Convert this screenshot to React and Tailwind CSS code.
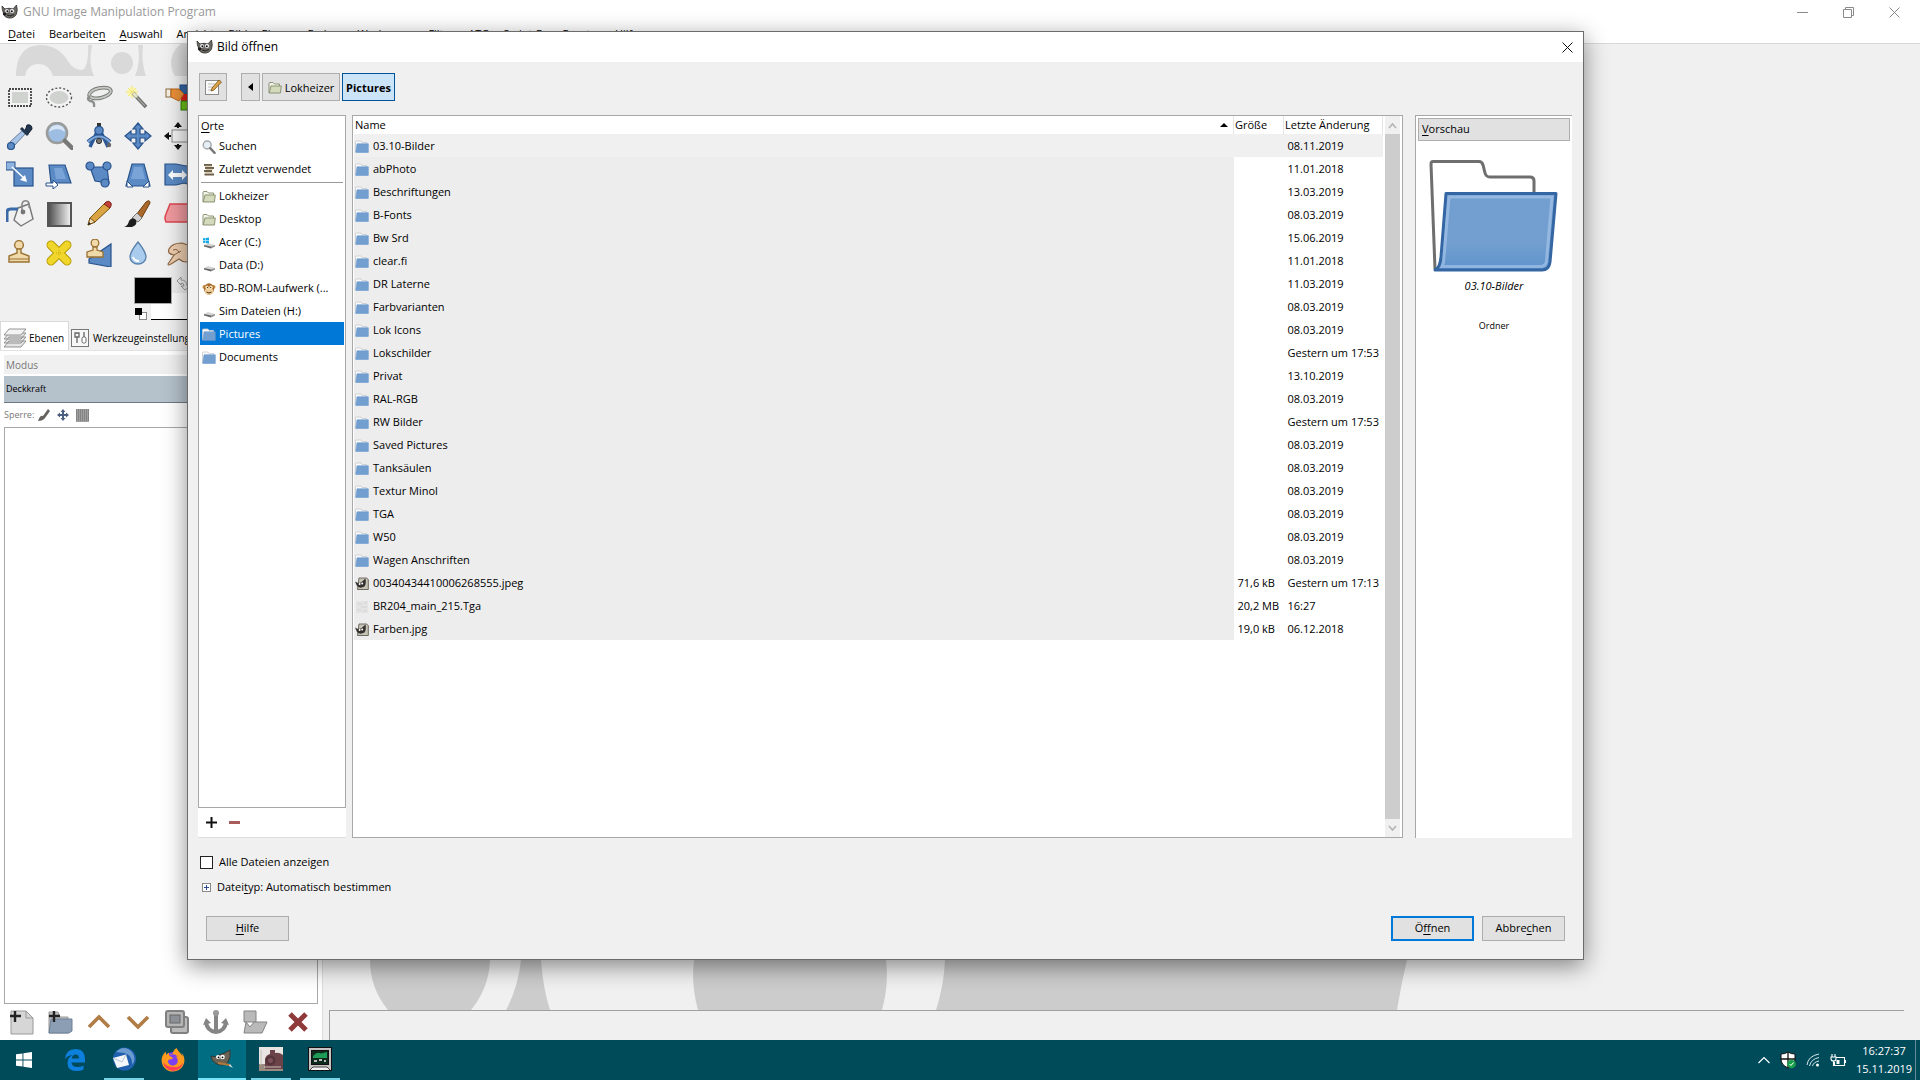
import React, { useState } from "react";
import { FaFirefoxBrowser } from "react-icons/fa";

const MENU = [
  ["", "D", "atei"],
  ["Bearbeite", "n", ""],
  ["", "A", "uswahl"],
  ["An", "s", "icht"],
  ["", "B", "ild"],
  ["", "E", "bene"],
  ["", "F", "arben"],
  ["", "W", "erkzeuge"],
  ["Filte", "r", ""],
  ["ATG", "", ""],
  ["", "S", "cript-Fu"],
  ["Fe", "n", "ster"],
  ["", "H", "ilfe"],
];

const PLACES = [
  { name: "Lokheizer", icon: "home" },
  { name: "Desktop", icon: "home" },
  { name: "Acer (C:)", icon: "win" },
  { name: "Data (D:)", icon: "drive" },
  { name: "BD-ROM-Laufwerk (...", icon: "monkey" },
  { name: "Sim Dateien (H:)", icon: "drive" },
  { name: "Pictures", icon: "folder" },
  { name: "Documents", icon: "folder" },
];

const FILES = [
  { name: "03.10-Bilder", date: "08.11.2019" },
  { name: "abPhoto", date: "11.01.2018" },
  { name: "Beschriftungen", date: "13.03.2019" },
  { name: "B-Fonts", date: "08.03.2019" },
  { name: "Bw Srd", date: "15.06.2019" },
  { name: "clear.fi", date: "11.01.2018" },
  { name: "DR Laterne", date: "11.03.2019" },
  { name: "Farbvarianten", date: "08.03.2019" },
  { name: "Lok Icons", date: "08.03.2019" },
  { name: "Lokschilder", date: "Gestern um 17:53" },
  { name: "Privat", date: "13.10.2019" },
  { name: "RAL-RGB", date: "08.03.2019" },
  { name: "RW Bilder", date: "Gestern um 17:53" },
  { name: "Saved Pictures", date: "08.03.2019" },
  { name: "Tanksäulen", date: "08.03.2019" },
  { name: "Textur Minol", date: "08.03.2019" },
  { name: "TGA", date: "08.03.2019" },
  { name: "W50", date: "08.03.2019" },
  { name: "Wagen Anschriften", date: "08.03.2019" },
  { name: "00340434410006268555.jpeg", size: "71,6 kB", date: "Gestern um 17:13", icon: "image" },
  { name: "BR204_main_215.Tga", size: "20,2 MB", date: "16:27", icon: "blank" },
  { name: "Farben.jpg", size: "19,0 kB", date: "06.12.2018", icon: "image" },
];

function Wilber({ className }) {
  return (
    <svg viewBox="0 0 18 16" className={className}>
      <path d="M1 2 L4 5 Q8 3.5 12 5 L15.5 1 Q17 6 15.5 10 Q13 14.5 8 14 Q3 13.5 2.5 9 Q1 6 1 2Z" fill="#6d6a63" stroke="#2f2d2a" strokeWidth=".8" />
      <path d="M6 11 Q9 13 13 10.5" stroke="#222" fill="none" />
      <circle cx="6" cy="7" r="2.3" fill="#f4f4f4" stroke="#333" strokeWidth=".5" />
      <circle cx="11" cy="7" r="2.5" fill="#f4f4f4" stroke="#333" strokeWidth=".5" />
      <circle cx="6.4" cy="7.2" r="1" fill="#111" />
      <circle cx="10.8" cy="7.2" r="1" fill="#111" />
      <ellipse cx="3.6" cy="10" rx="1.8" ry="1.4" fill="#1c1c1c" />
    </svg>
  );
}

function FileIcon({ type = "folder" }) {
  const cls = "h-[14px] w-[14px] shrink-0";
  if (type === "home")
    return (
      <svg viewBox="0 0 14 14" className={cls}>
        <path d="M1 12 V2.5 Q1 1.5 2 1.5 H5 L6.5 3 H11.5 V5" fill="#f1f3e6" stroke="#8b9375" />
        <path d="M3 5 H13.3 L12.4 12 H1.2Z" fill="#d3dabb" stroke="#8b9375" />
      </svg>
    );
  if (type === "image")
    return (
      <svg viewBox="0 0 14 14" className={cls}>
        <path d="M4 1 H11.5 L13.3 2.5 V12.5 H2.500Z" fill="#c6c4b6" stroke="#6c6a60" />
        <path d="M0 4.5 L3 6 L6 5.500 L10.5 1.500 Q11.5 7 9.5 9.500 Q5 12 2 9 Z" fill="#33312e" />
        <circle cx="4.6" cy="7" r="1" fill="#fff" />
        <circle cx="7.2" cy="6.600" r="1" fill="#fff" />
      </svg>
    );
  if (type === "blank")
    return (
      <svg viewBox="0 0 14 14" className={cls}>
        <path d="M1 1H13V13H1Z" fill="#e4e4e4" />
        <path d="M2 4H7M6 7H12M2 10H6M9 3H12M8 11H12" stroke="#d3d3d3" />
      </svg>
    );
  if (type === "win" || type === "drive")
    return (
      <svg viewBox="0 0 14 14" className={cls}>
        <path d="M2 9 L6 7 L13 9 L9 11.500Z" fill="#d5d5d5" />
        <path d="M2 9 L9 10.500 V12.500 L2 10.500Z" fill="#666" />
        <path d="M9 10.500 L13 9 V10.500 L9 12.500Z" fill="#8c8c8c" />
        {type === "win" && <path d="M1 2.2L3.3 2V4.3H1ZM3.8 1.9L7 1.5V4.3H3.8ZM1 4.8H3.3V7L1 6.8ZM3.8 4.8H7V7.5L3.8 7.1Z" fill="#18a9e8" />}
      </svg>
    );
  if (type === "monkey")
    return (
      <svg viewBox="0 0 14 14" className={cls}>
        <circle cx="2.5" cy="5" r="2" fill="#c98a3e" />
        <circle cx="11.5" cy="5" r="2" fill="#c98a3e" />
        <ellipse cx="7" cy="7" rx="5" ry="5.8" fill="#a8692a" />
        <ellipse cx="7" cy="9.3" rx="4.2" ry="3.4" fill="#f0cf9a" />
        <ellipse cx="5" cy="5.3" rx="1.7" ry="1.9" fill="#f7dfb6" />
        <ellipse cx="9" cy="5.3" rx="1.7" ry="1.9" fill="#f7dfb6" />
        <path d="M5 5.5h1M8.2 5.5h1M4.5 10 Q7 12 9.5 10" stroke="#4a2c0d" fill="none" />
      </svg>
    );
  if (type === "search")
    return (
      <svg viewBox="0 0 14 14" className={cls}>
        <circle cx="5.2" cy="5" r="4" fill="#e6eef5" stroke="#a3a6a8" strokeWidth="1.4" />
        <path d="M8.2 8.2 L12.6 12.8" stroke="#77797b" strokeWidth="2.4" strokeLinecap="round" />
      </svg>
    );
  if (type === "recent")
    return (
      <svg viewBox="0 0 14 14" className={cls}>
        <path d="M2 2H10M3 5H12M2 8H10M2.5 11.5H12" stroke="#6e5f48" strokeWidth="2" />
        <path d="M3 3.3H10M4 6.4H11M3 9.5H11" stroke="#d9cfb9" />
      </svg>
    );
  return (
    <svg viewBox="0 0 14 14" className={cls}>
      <path d="M.5 12V2Q.5 1 1.5 1H6L7 2.500H11.5V5" fill="#fbfbfb" stroke="#c3c8cd" strokeWidth=".8" />
      <path d="M2 3.800H13.3V12.4H.8Z" fill="#729fcf" stroke="#6496cc" strokeWidth=".6" />
    </svg>
  );
}

const blue = { fill: "#5b8ac4", stroke: "#28538c", strokeWidth: 1.2 };

const TOOLS = [
  ["Rechteckige Auswahl", <><rect x="3" y="6" width="22" height="17" fill="#f4f4f4" stroke="#111" strokeWidth="1.4" strokeDasharray="2 1" /><rect x="6" y="9" width="16" height="11" fill="#d0d2cf" /></>],
  ["Elliptische Auswahl", <><ellipse cx="14" cy="14.5" rx="12.5" ry="9.5" fill="#f4f4f4" stroke="#555" strokeWidth="1.4" strokeDasharray="2 2" /><ellipse cx="14" cy="14.5" rx="9.5" ry="6.5" fill="#d0d2cf" /></>],
  ["Freie Auswahl", <><ellipse cx="15" cy="10" rx="11" ry="5" fill="none" stroke="#777a76" strokeWidth="3.8" transform="rotate(-12 15 10)" /><ellipse cx="15" cy="10" rx="11" ry="5" fill="none" stroke="#c6c8c4" strokeWidth="1.8" transform="rotate(-12 15 10)" /><path d="M5 13Q1 16 5 18Q10 18 9 24" fill="none" stroke="#8b8e8a" strokeWidth="2.4" /></>],
  ["Zauberstab", <><circle cx="8" cy="9" r="5" fill="#fbf6b6" /><path d="M8 3V15M2 9H14M4 5L12 13M12 5L4 13" stroke="#f1e67a" /><path d="M9 10L22 24" stroke="#6d6e6a" strokeWidth="3.6" /><path d="M10 11L21 23" stroke="#a3a49f" strokeWidth="1.2" /><path d="M9 10L13 14" stroke="#e9e6c6" strokeWidth="3" /></>],
  ["Nach Farbe auswählen", <><rect x="16" y="2" width="12" height="9" fill="#3465a4" stroke="#204a87" /><rect x="17" y="11" width="11" height="8" fill="#e0201b" /><rect x="17" y="18" width="11" height="9" fill="#6cbf1a" stroke="#2e7d07" /><rect x="2" y="6" width="5" height="8" fill="#f5efe4" stroke="#8a6a3b" /><path d="M7 6H15L20 11L15 18L7 14Z" fill="#ec9139" stroke="#b8641a" /></>],
  ["Farbpipette", <><path d="M17 8L20 11L8 24L3 25L4 20Z" fill="#a7c5e8" stroke="#6a7f99" /><path d="M19 9L22 12L26 7Q26 2 21 3Z" fill="#22364e" stroke="#13202f" /><path d="M15 6L22 13" stroke="#22364e" strokeWidth="3" /><circle cx="5" cy="24" r="3.5" {...blue} /></>],
  ["Vergrößerung", <><circle cx="12" cy="11" r="10" fill="#9dbde3" stroke="#9a9c9a" strokeWidth="2.6" /><path d="M4 10Q12 4 20 10Q19 3 12 3Q5 3 4 10Z" fill="#d7e5f4" /><path d="M20 19L27 26" stroke="#777" strokeWidth="4.5" strokeLinecap="round" /></>],
  ["Maßband", <><path d="M14 1V6" stroke="#333" strokeWidth="4" /><path d="M12 10L5 25M16 10L23 25" stroke="#2d5a96" strokeWidth="3.4" /><path d="M3 20Q14 9 25 20" fill="none" stroke="#2d5a96" strokeWidth="4" /><path d="M3 20Q14 9 25 20" fill="none" stroke="#7ea7d8" strokeWidth="2" /><circle cx="14" cy="8.500" r="4.2" {...blue} /><circle cx="14" cy="19" r="2.6" fill="#777" stroke="#333" /><circle cx="24" cy="23" r="2.200" fill="#666" /></>],
  ["Verschieben", <path d="M14 1L19 7H16V12H21V9L27 14L21 19V16H16V21H19L14 27L9 21H12V16H7V19L1 14L7 9V12H12V7H9Z" {...blue} />],
  ["Ausrichtung", <><rect x="8" y="8" width="20" height="12" fill="#f3f3f3" stroke="#888" /><path d="M14 0L18 5H10ZM14 28L18 23H10ZM0 14L5 10V18Z" fill="#111" /><path d="M14 4V6M14 22V24M4 14H7" stroke="#111" strokeWidth="2" /></>],
  ["Skalieren", <><rect x="8" y="7" width="19" height="18" {...blue} /><rect x="0" y="1" width="9" height="8" fill="#8fb4e0" stroke="#28538c" /><path d="M6 6L20 19" stroke="#fff" strokeWidth="1.6" /><path d="M21 21L14 19L19 14Z" fill="#fff" /></>],
  ["Scheren", <><path d="M4 4H20L26 22H6Z" {...blue} /><path d="M9 7H17L21 18H11Z" fill="#7aa4d8" /><path d="M1 22H8V19L13 24L8 28V25H1Z" fill="#fff" stroke="#28538c" /></>],
  ["Vereinheitlichtes Transformieren", <><path d="M5 6H22L24 22L10 20Z" {...blue} /><circle cx="5" cy="5" r="4" {...blue} /><circle cx="22" cy="5" r="4" {...blue} /><circle cx="20" cy="22" r="4" {...blue} /></>],
  ["Perspektive", <><path d="M8 3H20L26 25H2Z" {...blue} /><path d="M10 6H18L21 18H7Z" fill="#7aa4d8" /><path d="M3 26V20L9 26ZM25 26V20L19 26Z" fill="#fff" stroke="#28538c" /></>],
  ["Spiegeln", <><path d="M1 3H12L22 5L30 3V25L20 22L12 24H1Z" {...blue} /><path d="M4 14L9 9V12H18V9L23 14L18 19V16H9V19Z" fill="#fff" /></>],
  ["Füllen", <><path d="M12 8L23 4L27 19L15 26L8 20Z" fill="#f2f2f2" stroke="#777" strokeWidth="1.4" /><path d="M1 22V12Q1 9 5 9H12" stroke="#3b6aa8" strokeWidth="3" fill="none" /><path d="M16 14V4Q17 0 21 1Q24 2 23 8" fill="none" stroke="#888" strokeWidth="1.6" /><circle cx="17" cy="12" r="2.4" fill="#777" /></>],
  ["Farbverlauf", <><defs><linearGradient id="grad"><stop stopColor="#4a4a4a" /><stop offset="1" stopColor="#f5f5f5" /></linearGradient></defs><rect x="3" y="3" width="23" height="23" fill="url(#grad)" stroke="#555" strokeWidth="2" /></>],
  ["Stift", <><path d="M3 25L5 18L20 3L25 8L10 22Z" fill="#d9a441" stroke="#7b5312" /><path d="M19 4L21 2Q24 0 26 3Q27 5 25 8Z" fill="#c3423a" stroke="#7f1f1a" /><path d="M3 25L5 18L10 22Z" fill="#f0dcb4" stroke="#7b5312" /><path d="M3 25L4 22L6 24Z" fill="#222" /></>],
  ["Pinsel", <><path d="M12 15L22 2Q26 -1 26 3L17 19Z" fill="#a8692a" stroke="#6b3e10" /><path d="M8 18L13 13L18 18L14 22Z" fill="#cfd0cf" stroke="#777" /><path d="M0 27Q4 26 5 21Q8 16 12 20Q14 25 8 27Z" fill="#1e1e1e" /></>],
  ["Radierer", <path d="M6 4H30V16L26 22H2Q0 18 2 14Z" fill="#f09a9f" stroke="#dd4650" strokeWidth="1.5" />],
  ["Klonen", <><circle cx="13" cy="6" r="4.4" fill="#f2d9a9" stroke="#9a7232" strokeWidth="1.4" /><path d="M11 10H15V14L23 17V23H3V17L11 14Z" fill="#f0d9a8" stroke="#9a7232" strokeWidth="1.4" /><path d="M3 20H23" stroke="#9a7232" /></>],
  ["Heilen", <><path d="M6 6L22 22M22 6L6 22" stroke="#b59a06" strokeWidth="9" strokeLinecap="round" /><path d="M6 6L22 22M22 6L6 22" stroke="#f0d62a" strokeWidth="7" strokeLinecap="round" /><path d="M11 14H17M14 11V17" stroke="#c4a90b" strokeDasharray="1 1" /></>],
  ["Perspektivisches Klonen", <><path d="M4 20L26 5V28L4 24Z" {...blue} /><circle cx="10" cy="4" r="3.8" fill="#f2d9a9" stroke="#9a7232" strokeWidth="1.3" /><path d="M8 8H12V11L18 13V18H2V13L8 11Z" fill="#f0d9a8" stroke="#9a7232" strokeWidth="1.3" /></>],
  ["Weichzeichnen", <><path d="M14 3Q22 13 22 18A8 7 0 0 1 6 18Q6 13 14 3Z" fill="#a9cbec" stroke="#587fab" strokeWidth="1.3" /><path d="M9 18Q10 22 15 22" stroke="#fff" strokeWidth="2" fill="none" /></>],
  ["Verschmieren", <><path d="M4 25L10 16Q3 15 5 10Q8 4 18 4L30 8V20Q22 26 15 20L7 25Q4 27 4 25Z" fill="#edcdb0" stroke="#8f6744" strokeWidth="1.2" /><path d="M9 11Q14 9 15 14M10 16L17 12" fill="none" stroke="#8f6744" /></>],
];

function Key({ parts }) {
  return (
    <span>
      {parts[0]}
      <span className="underline underline-offset-2">{parts[1]}</span>
      {parts[2]}
    </span>
  );
}

function Toolbox() {
  return (
    <aside className="flex w-[323px] shrink-0 flex-col border-r border-[#dcdcdc] bg-[#f0f0f0]">
      <svg viewBox="0 0 320 32" className="h-8 w-[320px]">
        <path d="M16 32Q16 2 40 1Q58 1 68 17Q73 26 83 26Q89 20 88 1H92Q88 20 94 32H53Q49 20 39 20Q27 20 25 32Z" fill="#d9d9d9" />
        <circle cx="122" cy="19" r="11" fill="#d9d9d9" />
        <path d="M138 1H143Q141 18 146 32H135Q141 18 138 1Z" fill="#d9d9d9" />
        <circle cx="194" cy="19" r="23" fill="#d9d9d9" />
      </svg>
      <div className="grid w-[316px] grid-cols-8 pt-px">
        {TOOLS.map(([name, art], i) => (
          <button
            key={name}
            title={name}
            className={`flex h-[39px] items-center justify-center ${i % 5 === 0 ? "col-start-1" : ""}`}
          >
            <svg viewBox="0 0 28 28" className="h-7 w-7">
              {art}
            </svg>
          </button>
        ))}
      </div>
      {/* Vordergrund / Hintergrund */}
      <svg viewBox="0 0 80 44" className="mt-[5px] ml-[133px] h-11 w-20">
        <rect x="18" y="16" width="60" height="26" fill="#fff" />
        <path d="M18 42.5H78" stroke="#000" />
        <rect x="1.500" y=".5" width="37" height="26" fill="#000" stroke="#aaa" />
        <rect x="6.500" y="35.500" width="7" height="7" fill="#fff" stroke="#888" />
        <rect x="2" y="31" width="7" height="7" fill="#000" />
        <path d="M44 4L48 0V3Q54 3 54 9H57L52 13L48 9H51Q51 6 48 6V8Z" fill="#eee" stroke="#888" strokeWidth=".8" />
      </svg>
      <Layers />
    </aside>
  );
}

function Layers() {
  const gray = { fill: "#b9b9b9", stroke: "#838383" };
  const actions = [
    ["Neue Ebene", <><path d="M3 2H18L25 9V25H3Z" fill="#d6d6d6" stroke="#999" /><path d="M18 2V9H25" fill="none" stroke="#999" /><path d="M7 2V13M2 7H13" stroke="#222" strokeWidth="2.4" /></>],
    ["Neue Ebenengruppe", <><path d="M2 24V3H11L13 8H21V24Z" fill="#c2c2c2" stroke="#999" /><path d="M4 10H25V22L22 24H2Z" fill="#8c9eb4" stroke="#6d8098" /><path d="M7 2V13M2 7H13" stroke="#222" strokeWidth="2.4" /></>],
    ["Ebene anheben", <path d="M3 18L13 8L23 18" fill="none" stroke="#b07d47" strokeWidth="3.6" />],
    ["Ebene absenken", <path d="M3 8L13 18L23 8" fill="none" stroke="#b07d47" strokeWidth="3.6" />],
    ["Ebene duplizieren", <><rect x="7" y="8" width="17" height="16" rx="2" fill="#bbb" stroke="#808080" strokeWidth="2" /><rect x="2" y="2" width="18" height="16" rx="2" fill="#b5b5b5" stroke="#808080" strokeWidth="2" /><rect x="6" y="6" width="10" height="8" fill="#8b8f96" stroke="#666" /></>],
    ["Ebene verankern", <><path d="M13 3V23M3 13Q4 22 13 23Q22 22 23 13" fill="none" stroke="#858585" strokeWidth="4" /><circle cx="13" cy="4" r="3" fill="#999" /><path d="M0 16L3 9L8 14ZM26 16L23 9L18 14Z" fill="#858585" /></>],
    ["Nach unten vereinen", <><path d="M2 2H14V13H2Z" {...gray} /><path d="M4 13L8 18L12 13H25L20 24H2Z" {...gray} /></>],
    ["Ebene löschen", <path d="M5 5L21 21M21 5L5 21" stroke="#8f3a3a" strokeWidth="5" />],
  ];
  return (
    <section className="flex flex-1 flex-col text-[10px] leading-4">
      <div className="flex h-[30px] items-stretch border-b border-[#e2e2e2]">
        <button className="flex w-[69px] items-center gap-[3px] border border-b-0 border-[#d9d9d9] bg-white pt-1 pl-[3px]">
          <svg viewBox="0 0 22 20" className="h-5 w-[22px]">
            <path d="M5 13H22L17 19H0ZM5 9H22L17 15H0ZM5 5H22L17 11H0Z" fill="#e4e4e4" stroke="#888" strokeWidth=".9" />
            <path d="M5 1H22L17 7H0Z" fill="#f3f3f3" stroke="#888" strokeWidth=".9" />
          </svg>
          Ebenen
        </button>
        <button className="flex items-center gap-1 pt-1 pl-0.5 whitespace-nowrap">
          <svg viewBox="0 0 18 18" className="h-[18px] w-[18px]">
            <rect x=".5" y=".5" width="17" height="17" fill="#f7f7f7" stroke="#777" />
            <path d="M4 4H8V8H4ZM6 8V14M13 3V8" stroke="#666" strokeWidth="1.3" fill="none" />
            <rect x="11" y="8" width="4" height="6" rx="1.500" fill="#fff" stroke="#666" />
          </svg>
          Werkzeugeinstellungen
        </button>
      </div>
      <div className="flex flex-1 flex-col bg-white px-1 pt-1">
        <div className="flex h-[19px] items-center bg-[#f0f0f0] px-0.5 text-[#777]">Modus</div>
        <div className="mt-0.5 flex h-[27px] items-center border-b border-[#6f7a85] bg-[#b5c1cb] px-0.5 text-[9px]">Deckkraft</div>
        <div className="flex h-6 items-center gap-1 text-[9px] text-[#777]">
          Sperre:
          <span className="flex items-center gap-[7px]">
            <svg viewBox="0 0 12 12" className="h-3 w-3">
              <path d="M0 12Q2 6 5 7L10 0L12 2L7 9Q5 12 0 12Z" fill="#66635f" />
            </svg>
            <svg viewBox="0 0 12 12" className="h-3 w-3">
              <path d="M6 0L8.500 3H7V5H9V3.500L12 6L9 8.500V7H7V9H8.500L6 12L3.500 9H5V7H3V8.500L0 6L3 3.500V5H5V3H3.500Z" fill="#4b5f80" />
            </svg>
            <svg viewBox="0 0 13 13" className="h-[13px] w-[13px]">
              <rect width="13" height="13" fill="#a0a0a0" />
              <path d="M0 1H13M0 3H13M0 5H13M0 7H13M0 9H13M0 11H13" stroke="#666" strokeDasharray="1 1" />
            </svg>
          </span>
        </div>
        <div className="flex-1 border border-[#a8a8a8]" />
        <div className="flex h-9 items-center gap-[13px] px-1">
          {actions.map(([name, art], i) => (
            <button key={name} title={name} className={i === 7 ? "ml-1" : ""}>
              <svg viewBox="0 0 26 26" className="h-[26px] w-[26px]">
                {art}
              </svg>
            </button>
          ))}
        </div>
      </div>
    </section>
  );
}

function Places({ active, onPick }) {
  const row = "flex h-[23px] w-full items-center gap-[3px] px-0.5 pt-0.5 whitespace-nowrap";
  return (
    <div className="flex w-[148px] shrink-0 flex-col">
      <div className="flex-1 border border-[#a8a8a8] bg-white px-px">
        <div className="px-px pt-0.5 leading-4">
          <Key parts={["", "O", "rte"]} />
        </div>
        <button className={row}>
          <FileIcon type="search" /> Suchen
        </button>
        <button className={row}>
          <FileIcon type="recent" /> Zuletzt verwendet
        </button>
        <hr className="mx-px mt-0.5 mb-px border-[#9a9a9a]" />
        {PLACES.map((p) => (
          <button
            key={p.name}
            onClick={() => onPick(p.name)}
            className={`${row} ${p.name === active ? "bg-[#0078d7] text-white" : ""}`}
          >
            <FileIcon type={p.icon} /> {p.name}
          </button>
        ))}
      </div>
      <div className="flex h-[30px] items-center gap-3 border-b border-[#ddd] bg-white pl-2">
        <button title="Hinzufügen">
          <svg viewBox="0 0 11 11" className="h-[11px] w-[11px]">
            <path d="M5.500 0V11M0 5.500H11" stroke="#111" strokeWidth="2" />
          </svg>
        </button>
        <button title="Entfernen">
          <svg viewBox="0 0 11 11" className="h-[11px] w-[11px]">
            <path d="M0 5.500H11" stroke="#a85c5c" strokeWidth="3" />
          </svg>
        </button>
      </div>
    </div>
  );
}

function FileList() {
  return (
    <div className="flex min-w-0 flex-1 border border-[#a8a8a8] bg-white pr-0.5 pl-px">
      <div className="min-w-0 flex-1 pr-0.5">
        <table className="w-full table-fixed border-collapse text-left">
          <thead>
            <tr className="h-[18px]">
              <th className="border-r border-[#e5e5e5] px-px font-normal">
                <span className="flex items-center justify-between pr-1">
                  Name
                  <svg viewBox="0 0 8 4" className="h-1 w-2">
                    <path d="M4 0L8 4H0Z" />
                  </svg>
                </span>
              </th>
              <th className="w-[50px] border-r border-[#e5e5e5] px-px font-normal">Größe</th>
              <th className="w-[99px] border-r border-[#e5e5e5] px-px font-normal whitespace-nowrap">Letzte Änderung</th>
            </tr>
          </thead>
          <tbody>
            {FILES.map((f, i) => (
              <tr key={f.name} className={`h-[23px] ${i === 0 ? "bg-[#f0f0f0]" : ""}`}>
                <td className={`px-px pt-0.5 ${i === 0 ? "" : "bg-[#ededed]"}`}>
                  <span className="flex items-center gap-1">
                    <FileIcon type={f.icon} /> {f.name}
                  </span>
                </td>
                <td className="px-1 pt-0.5 whitespace-nowrap">{f.size}</td>
                <td className="px-1 pt-0.5 whitespace-nowrap">{f.date}</td>
              </tr>
            ))}
          </tbody>
        </table>
      </div>
      <div className="flex w-[15px] flex-col bg-[#f0f0f0]">
        <svg viewBox="0 0 15 18" className="h-[18px]">
          <path d="M4 12L7.500 8L11 12" fill="none" stroke="#b4b4b4" strokeWidth="1.600" />
        </svg>
        <div className="flex-1 bg-[#cdcdcd]" />
        <svg viewBox="0 0 15 18" className="h-[18px]">
          <path d="M4 7L7.500 11L11 7" fill="none" stroke="#b4b4b4" strokeWidth="1.600" />
        </svg>
      </div>
    </div>
  );
}

function Preview() {
  return (
    <div className="flex w-[157px] shrink-0 flex-col items-center border-t border-l border-[#a8a8a8] bg-white px-0.5 pt-0.5">
      <button className="h-[23px] w-full border border-[#adadad] bg-[#e1e1e1] px-[3px] text-left">
        <Key parts={["", "V", "orschau"]} />
      </button>
      <svg viewBox="0 0 130 114" className="mt-[18px] h-[114px] w-[130px]">
        <defs>
          <linearGradient id="front" x2="0" y2="1">
            <stop stopColor="#729fcf" />
            <stop offset=".65" stopColor="#729fcf" />
            <stop offset="1" stopColor="#5f93cd" />
          </linearGradient>
        </defs>
        <path d="M6 110L2 5Q2 2.500 4 2.500H50Q53 2.500 54 6L56 14Q57 18 61 18H101Q105 18 105 22V34" fill="#fff" stroke="#6e6e6e" strokeWidth="3" />
        <path d="M17 34.500H127L121 103Q120 111 113 111H6Q11 109 12 98Z" fill="url(#front)" stroke="#3566a4" strokeWidth="3" strokeLinejoin="round" />
        <path d="M20 38H123L117.500 102Q117 107 112 107.500H13Q15 104 15 98Z" fill="none" stroke="#a3c3e8" strokeWidth="3" opacity=".7" />
      </svg>
      <span className="mt-[5px] italic leading-4">03.10-Bilder</span>
      <span className="mt-6 text-[9px] leading-4">Ordner</span>
    </div>
  );
}

function OpenDialog() {
  const [place, setPlace] = useState("Pictures");
  const [showAll, setShowAll] = useState(false);
  const btn = "flex h-[25px] w-[83px] items-center justify-center";
  return (
    <div
      role="dialog"
      aria-label="Bild öffnen"
      className="absolute top-[31px] right-[336px] bottom-[120px] left-[187px] flex flex-col border border-[#6b6b6b] bg-[#f0f0f0] shadow-[0_6px_22px_rgba(0,0,0,0.45)]"
    >
      <header className="flex h-[30px] shrink-0 items-center bg-white pr-2.5 pl-2">
        <Wilber className="h-4 w-[18px]" />
        <h1 className="ml-[3px] flex-1 text-xs">Bild öffnen</h1>
        <button aria-label="Schließen">
          <svg viewBox="0 0 11 11" className="h-[11px] w-[11px]">
            <path d="M.5.5L10.500 10.500M10.500.5L.5 10.500" stroke="#111" />
          </svg>
        </button>
      </header>

      <div className="mt-[11px] ml-[11px] flex h-[28px] shrink-0">
        <button title="Dateinamen eingeben" className="flex w-7 items-center justify-center border border-[#adadad] bg-[#e1e1e1]">
          <svg viewBox="0 0 18 18" className="h-[18px] w-[18px]">
            <rect x="1.500" y="2.500" width="13" height="14" fill="#fafafa" stroke="#8a8a8a" />
            <path d="M4 6H11M4 9H9M4 12H8" stroke="#bbb" />
            <path d="M7 13L8 10L15 2L17.500 4L10 12Z" fill="#dba24a" stroke="#7a5212" strokeWidth=".8" />
          </svg>
        </button>
        <button aria-label="Zurück" className="ml-3.5 flex w-[19px] items-center justify-center border border-[#adadad] bg-[#e1e1e1]">
          <svg viewBox="0 0 5 8" className="h-2 w-[5px]">
            <path d="M5 0V8L0 4Z" />
          </svg>
        </button>
        <button className="ml-0.5 flex w-[78px] items-center justify-center gap-[3px] border border-[#adadad] bg-[#e1e1e1] pt-0.5">
          <FileIcon type="home" /> Lokheizer
        </button>
        <button className="ml-0.5 w-[53px] border border-[#005499] bg-[#cce4f7] pt-0.5 font-bold">Pictures</button>
      </div>

      <div className="mt-3.5 flex min-h-0 flex-1 pr-[11px] pl-2.5">
        <Places active={place} onPick={setPlace} />
        <div className="w-1.5" />
        <FileList />
        <div className="w-3" />
        <Preview />
      </div>

      <div className="mt-4 flex flex-col items-start gap-[9px] pl-3">
        <label className="flex h-4 items-center gap-1.5">
          <input
            type="checkbox"
            checked={showAll}
            onChange={(e) => setShowAll(e.target.checked)}
            className="h-[13px] w-[13px] appearance-none border border-[#222] bg-white checked:bg-[#0078d7]"
          />
          Alle Dateien anzeigen
        </label>
        <button className="flex h-4 items-center gap-1.5 pl-0.5">
          <svg viewBox="0 0 9 9" className="h-[9px] w-[9px]">
            <rect x=".5" y=".5" width="8" height="8" fill="#fff" stroke="#8a8a8a" />
            <path d="M2 4.500H7M4.500 2V7" stroke="#2d4a9a" />
          </svg>
          <Key parts={["Datei", "t", "yp: Automatisch bestimmen"]} />
        </button>
      </div>

      <footer className="mt-[21px] mb-[18px] flex gap-2 px-[18px]">
        <button className={`${btn} border border-[#adadad] bg-[#e1e1e1]`}>
          <Key parts={["", "H", "ilfe"]} />
        </button>
        <div className="flex-1" />
        <button className={`${btn} border-2 border-[#0078d7] bg-[#e1e1e1]`}>
          <Key parts={["Ö", "f", "fnen"]} />
        </button>
        <button className={`${btn} border border-[#adadad] bg-[#e1e1e1]`}>
          <Key parts={["Abbre", "c", "hen"]} />
        </button>
      </footer>
    </div>
  );
}

function Taskbar() {
  const apps = [
    ["Edge", "", <svg viewBox="0 0 24 24" className="h-6 w-6"><path d="M2 11Q3 1 12.500 1Q22 1 22 12V14.500H8.500Q9 19 14.500 19Q18 19 20.500 17.500V21.500Q17.500 23 13.500 23Q4.500 23 4.500 15Q4.500 9.500 9.500 7Q4.500 7.500 2 11ZM8.700 10.500H16Q16 6.500 12.600 6.500Q9.500 6.500 8.700 10.500Z" fill="#0d7fdc" /></svg>],
    ["Thunderbird", "mx-1 border-b-2 border-[#76d3e6]", <svg viewBox="0 0 24 24" className="h-6 w-6"><circle cx="12.500" cy="12" r="11.500" fill="#1f5fae" /><path d="M4 5Q12 -3 20 5Q25 12 20 18Q21 8 12 6Z" fill="#6c9bd0" /><path d="M1 11L14 7.500L17 18L5 21Z" fill="#f4f6fa" /><path d="M1 11L10 15L14 7.500" fill="none" stroke="#b9c4d6" /></svg>],
    ["Firefox", "", <svg viewBox="0 0 24 24" className="h-6 w-6"><circle cx="12" cy="13" r="9" fill="#7a3ff0" /><foreignObject width="24" height="24"><FaFirefoxBrowser size={24} color="#ff9a1e" /></foreignObject><path d="M2 14Q4 22 12 23Q21 22 22.500 13Q20 20 13 19Q5 19 2 14Z" fill="#ff4057" /></svg>],
    ["GIMP", "border-b-2 border-[#76e3f6] bg-[#006d83]", <svg viewBox="0 0 24 20" className="h-5 w-6"><path d="M1 7Q5 9 9 6Q14 5 20 1Q21 8 18 13Q13 18 7 15Q1 12 1 7Z" fill="#6b6355" stroke="#2b2722" strokeWidth=".7" /><circle cx="8" cy="8" r="2" fill="#fff" /><circle cx="12.500" cy="8" r="2.300" fill="#fff" /><circle cx="8.500" cy="8.300" r=".9" /><circle cx="12.500" cy="8.300" r=".9" /><path d="M8 14L20 16" stroke="#b7793b" strokeWidth="1.800" /><path d="M20 15L23 19L19 17Z" fill="#ddd" /></svg>],
    ["Zusi", "mx-1 border-b-2 border-[#76d3e6]", <svg viewBox="0 0 24 24" className="h-6 w-6"><rect width="24" height="24" fill="#e9e5e2" /><path d="M0 17H24V24H0Z" fill="#9a8a80" /><path d="M11 3H16V6Q20 5 24 8V22H6V12Q7 8 11 7Z" fill="#6a4248" /><circle cx="11.500" cy="13.500" r="5" fill="#54343a" /><circle cx="11.500" cy="13.500" r="2.500" fill="#7c5157" /><path d="M2 3V18M5 20H22" stroke="#c6beb8" /></svg>],
    ["Monitor", "mx-1 border-b-2 border-[#76d3e6]", <svg viewBox="0 0 24 24" className="h-6 w-6"><rect x=".5" y=".5" width="23" height="23" fill="#c8c4c4" stroke="#111" /><rect x="3.500" y="3.500" width="17" height="14" fill="#0d2a1c" stroke="#111" /><path d="M5 9Q9 4 13 6.500L19 5V11H5Z" fill="#1d9b57" /><path d="M6 14H9M11 13H14M16 14H18" stroke="#bbb" strokeWidth="2" /><path d="M2 23L5 20H19L22 23" fill="#f2f2f2" stroke="#444" /></svg>],
  ];
  return (
    <footer className="flex h-10 shrink-0 items-stretch bg-[#004b5a] text-white">
      <button aria-label="Start" className="mr-[3px] flex w-12 items-center justify-center">
        <svg viewBox="0 0 16 16" className="h-4 w-4" fill="#fff">
          <path d="M0 2.300L6.500 1.400V7.600H0ZM7.400 1.300L16 0V7.600H7.400ZM0 8.400H6.500V14.600L0 13.700ZM7.400 8.400H16V16L7.400 14.800Z" />
        </svg>
      </button>
      <div className="flex gap-px">
        {apps.map(([name, cls, art]) => (
          <button key={name} aria-label={name} className={`flex items-center justify-center ${cls} ${cls.startsWith("mx-1") ? "w-10" : "w-12"}`}>
            {art}
          </button>
        ))}
      </div>
      <div className="flex-1" />
      <div className="flex items-center gap-2.5">
        <svg viewBox="0 0 12 8" className="h-2 w-3">
          <path d="M.5 7L6 1.500L11.500 7" fill="none" stroke="#fff" strokeWidth="1.200" />
        </svg>
        <svg viewBox="0 0 16 18" className="h-[18px] w-4">
          <path d="M8 1Q11 3 15 3V8Q15 14 8 17Q1 14 1 8V3Q5 3 8 1Z" fill="#fff" stroke="#111" />
          <path d="M8 1V17M1 8H15" stroke="#111" strokeWidth="1.300" />
          <circle cx="11.500" cy="13" r="4.300" fill="#18a14b" />
          <path d="M9.500 13L11 14.500L13.500 11.500" stroke="#fff" fill="none" />
        </svg>
        <svg viewBox="0 0 14 14" className="h-3.5 w-3.5">
          <path d="M1 12Q2 3 13 1M3.500 13Q5 6 13 4.500M6.500 13Q7.500 9 13 8" fill="none" stroke="#d7e5e8" />
          <circle cx="11.500" cy="12" r="1.500" fill="#fff" />
        </svg>
        <svg viewBox="0 0 17 13" className="h-[13px] w-[17px]">
          <path d="M6 3.500H14.500V11.500H4.500V8M15.500 6V9M1 3H6V5Q6 7 3.500 7Q1 7 1 5ZM2 3V0M5 3V0M3.500 7V11.500H5" fill="none" stroke="#fff" strokeWidth="1.100" />
          <rect x="6.500" y="6" width="3" height="4" fill="#fff" />
        </svg>
        <div className="flex w-[54px] flex-col items-center text-[11px] leading-[18px]">
          <span>16:27:37</span>
          <span>15.11.2019</span>
        </div>
      </div>
      <div className="mr-1 ml-1 border-l border-[#5f8c96]" />
    </footer>
  );
}

export default function App() {
  return (
    <div className="relative flex h-screen min-h-[700px] flex-col overflow-hidden bg-[#f0f0f0] font-['Open_Sans','Noto_Sans',sans-serif] text-[11px] text-black">
      <header className="flex h-6 shrink-0 items-center bg-white pr-5 pl-px">
        <Wilber className="h-4 w-[18px]" />
        <span className="ml-1 flex-1 text-xs text-[#999]">GNU Image Manipulation Program</span>
        <div className="flex gap-[35px]">
          <button aria-label="Minimieren">
            <svg viewBox="0 0 11 11" className="h-[11px] w-[11px]">
              <path d="M0 5.500H11" stroke="#8a8a8a" />
            </svg>
          </button>
          <button aria-label="Verkleinern">
            <svg viewBox="0 0 11 11" className="h-[11px] w-[11px]">
              <path d="M.5 2.500H8.500V10.500H.5ZM2.500 2.500V.5H10.500V8.500H8.500" fill="none" stroke="#8a8a8a" />
            </svg>
          </button>
          <button aria-label="Beenden">
            <svg viewBox="0 0 11 11" className="h-[11px] w-[11px]">
              <path d="M.5.5L10.500 10.500M10.500.5L.5 10.500" stroke="#8a8a8a" />
            </svg>
          </button>
        </div>
      </header>
      <nav className="flex h-5 shrink-0 items-center border-b border-[#d8d8d8] bg-white pt-0.5 pl-px">
        {MENU.map((m) => (
          <button key={m.join("")} className="px-[7px]">
            <Key parts={m} />
          </button>
        ))}
      </nav>
      <main className="flex min-h-0 flex-1">
        <Toolbox />
        <div className="flex min-w-0 flex-1 flex-col justify-end">
          <svg viewBox="0 0 1100 60" className="h-[60px] w-[1100px]" fill="#cccccc">
            <path d="M47 0V10Q47 38 65 60H148Q166 38 167 10V0Z" />
            <path d="M198 0V10Q195 38 183 60H227Q220 38 218 10V0Z" />
            <path d="M371 0V10Q368 35 375 60H559Q566 35 563 10V0Z" />
            <path d="M622 0V10Q621 35 613 60H1074Q1078 35 1084 10V0Z" />
          </svg>
          <div className="mr-4 ml-1.5 h-[30px] border-t border-l border-[#a0a0a0]" />
        </div>
      </main>
      <Taskbar />
      <OpenDialog />
    </div>
  );
}
